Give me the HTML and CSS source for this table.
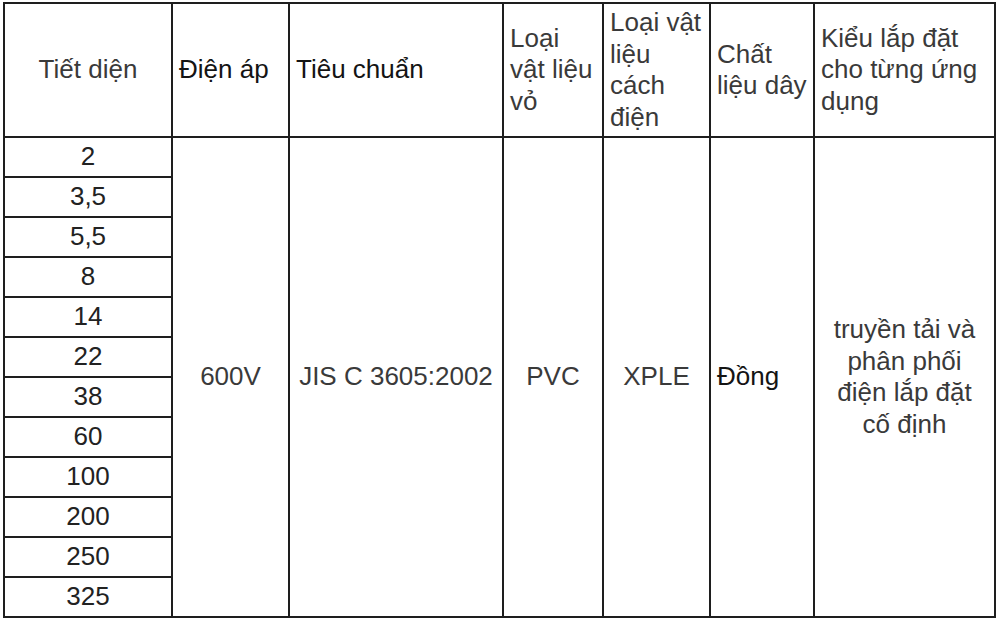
FILE: index.html
```html
<!DOCTYPE html>
<html lang="vi">
<head>
<meta charset="utf-8">
<title>Bảng thông số cáp</title>
<link rel="stylesheet" href="styles.css">
</head>
<body>
<div class="sheet">
  <div class="cell head center">Tiết diện</div>
  <div class="cell head dark">Điện áp</div>
  <div class="cell head dark">Tiêu chuẩn</div>
  <div class="cell head">Loại vật liệu vỏ</div>
  <div class="cell head">Loại vật liệu cách điện</div>
  <div class="cell head">Chất liệu dây</div>
  <div class="cell head wide">Kiểu lắp đặt cho từng ứng dụng</div>

  <div class="cell num r1">2</div>
  <div class="cell span center c2">600V</div>
  <div class="cell span center c3">JIS C 3605:2002</div>
  <div class="cell span center c4">PVC</div>
  <div class="cell span center c5">XPLE</div>
  <div class="cell span dark c6">Đồng</div>
  <div class="cell span center c7 use">truyền tải và phân phối điện lắp đặt cố định</div>

  <div class="cell num">3,5</div>
  <div class="cell num">5,5</div>
  <div class="cell num">8</div>
  <div class="cell num">14</div>
  <div class="cell num">22</div>
  <div class="cell num">38</div>
  <div class="cell num">60</div>
  <div class="cell num">100</div>
  <div class="cell num">200</div>
  <div class="cell num">250</div>
  <div class="cell num">325</div>
</div>
</body>
</html>
```

FILE: styles.css
```css
html, body {
  margin: 0;
  padding: 0;
  background: #ffffff;
}

body {
  font-family: "Liberation Sans", Arial, sans-serif;
  font-size: 26px;
  line-height: 31.5px;
  color: #3a3a3a;
}

.sheet {
  display: grid;
  grid-template-columns: 166px 115px 212px 98px 105px 102px 179px;
  grid-template-rows: 132px repeat(12, 38px);
  gap: 2px;
  padding: 2px;
  background: #1e1e1e;
  width: max-content;
  margin: 2px 0 0 3px;
}

.cell {
  background: #ffffff;
  display: flex;
  align-items: center;
  padding: 0 2px 0 6px;
  overflow: hidden;
}

.head.wide {
  padding-right: 10px;
}

.center {
  justify-content: center;
  text-align: center;
  padding: 0 4px;
}

.dark {
  color: #141414;
}

.num {
  grid-column: 1;
  justify-content: center;
  padding: 0;
  color: #222222;
}

.span {
  grid-row: 2 / span 12;
}

.c2 { grid-column: 2; }
.c3 { grid-column: 3; padding: 0; }
.c4 { grid-column: 4; }
.c5 { grid-column: 5; }
.c6 { grid-column: 6; }
.c7 { grid-column: 7; }

.use {
  padding: 0 9px;
}
```
